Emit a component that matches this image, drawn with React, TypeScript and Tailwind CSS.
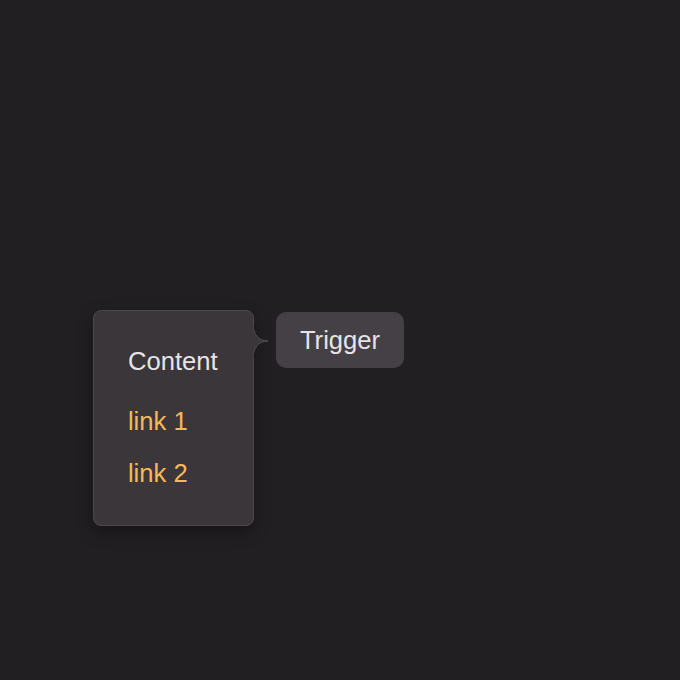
export default function App() {
  return (
    <div className="flex h-[680px] w-[680px] items-center justify-center bg-[#221f23] font-['Liberation_Sans',Arial,sans-serif]">
      <div className="relative">
        <button className="rounded-[10px] bg-[#444045] px-6 py-3 text-[25.6px] leading-8 text-[#e6e4e8]">
          Trigger
        </button>

        {/* popover */}
        <div className="absolute right-[calc(100%+22px)] top-[-2px] w-[161px] rounded-lg border border-[#4b474c] bg-[#3a363a] pb-[36px] pl-[34px] pt-[34px] shadow-[0_6px_16px_rgba(0,0,0,0.35)]">
          <p className="text-[25.6px] leading-8 text-[#e6e4e8]">Content</p>
          <div className="mt-7 flex flex-col gap-5">
            <a href="#" className="text-[25.6px] leading-8 text-[#f7b955]">
              link 1
            </a>
            <a href="#" className="text-[25.6px] leading-8 text-[#f7b955]">
              link 2
            </a>
          </div>
          <svg
            className="absolute right-[-16px] top-[12px]"
            width="17"
            height="36"
            viewBox="0 0 17 36"
          >
            <path
              d="M1 0 C1 11 6 18 16 18 C6 18 1 25 1 36"
              fill="#3a363a"
              stroke="#55505a"
              strokeWidth="1"
            />
            <rect x="0" y="0.5" width="1.5" height="35" fill="#3a363a" />
          </svg>
        </div>
      </div>
    </div>
  );
}
